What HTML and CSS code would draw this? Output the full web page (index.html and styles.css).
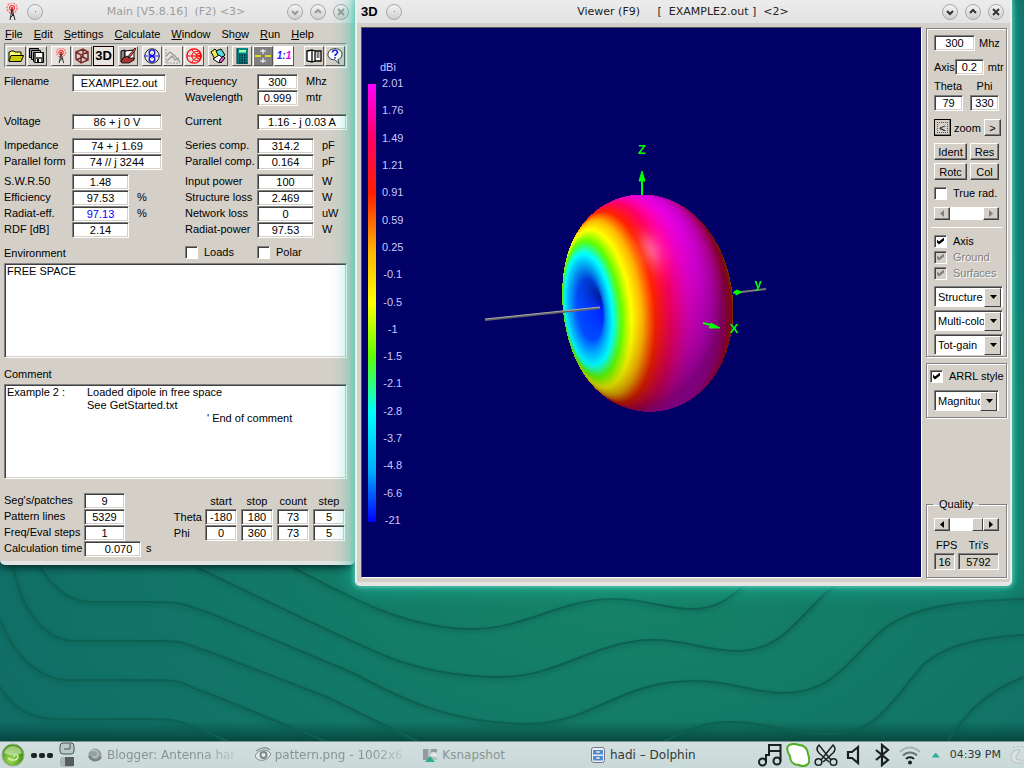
FILE: index.html
```html
<!DOCTYPE html>
<html lang="en">
<head>
  <meta charset="UTF-8">
  <meta name="viewport" content="width=device-width, initial-scale=1.0">
  <title>Main [V5.8.16]</title>
  <link rel="stylesheet" href="styles.css">
</head>
<body>
  <svg class="defs" aria-hidden="true">
    <symbol id="antenna" viewBox="0 0 16 18">
      <circle cx="8" cy="5" r="5" fill="none" stroke="#f77" stroke-width="1.500" stroke-dasharray="2 1"/>
      <circle cx="8" cy="5" r="2.500" fill="none" stroke="#f33" stroke-width="1.200"/>
      <circle cx="8" cy="5" r="1" fill="#d00"/>
      <path d="M8 6 L6 17 M8 6 L11 17 M7 10 L10 13 M10 11 L6 15" stroke="#222" fill="none"/>
    </symbol>
    <symbol id="down" viewBox="0 0 16 16"><path d="M5 7 L8 10 L11 7"/></symbol>
    <symbol id="up" viewBox="0 0 16 16"><path d="M5 9 L8 6 L11 9"/></symbol>
    <symbol id="close" viewBox="0 0 16 16"><path d="M5 5 L11 11 M11 5 L5 11"/></symbol>
  </svg>

  <main class="desktop">
    <svg class="wallpaper" viewBox="0 0 1024 741" preserveAspectRatio="none" aria-hidden="true">
      <g class="wave-shade">
        <path d="M294 568 C350 597 405 629 473 629 C525 629 560 599 614 599 C645 599 665 609 692 609 C718 609 732 596 745 585"/>
        <path d="M196 567 C260 598 350 641 390 658 C425 671 460 677 500 677 C560 677 595 640 653 640 C690 640 705 651 738 651 C785 651 800 612 836 585"/>
        <path d="M39 565 C50 583 65 601 90 602 L150 602 C190 602 185 606 210 613 L353 673 C400 698 450 724 529 724 C590 724 620 681 692 681 C735 681 750 693 784 693 C835 693 850 657 885 628 C915 606 960 601 1024 599"/>
        <path d="M13 565 C20 603 40 640 75 641 L155 641 C195 641 185 646 210 652 L327 697 L425 745"/>
        <path d="M0 620 C12 650 35 679 68 680 L150 680 C190 680 180 685 205 692 L335 745"/>
        <path d="M0 687 C12 705 25 718 55 719 L144 719 C185 719 180 723 200 729 L236 745"/>
        <path d="M657 745 C690 728 705 722 732 722 C770 722 790 735 830 734 C880 734 895 695 925 663 C950 643 985 637 1024 635"/>
        <path d="M945 745 C960 722 980 693 1024 677"/>
      </g>
    </svg>

    <section class="window main-window">
      <header class="titlebar inactive">
        <svg class="app-icon"><use href="#antenna"/></svg>
        <button class="round dot" aria-label="Window menu"></button>
        <h1>Main [V5.8.16] &nbsp;(F2) &lt;3&gt;</h1>
        <div class="window-buttons">
          <button class="round" aria-label="Minimize"><svg><use href="#down"/></svg></button>
          <button class="round" aria-label="Maximize"><svg><use href="#up"/></svg></button>
          <button class="round" aria-label="Close"><svg><use href="#close"/></svg></button>
        </div>
      </header>

      <nav class="menubar">
        <button><u>F</u>ile</button>
        <button><u>E</u>dit</button>
        <button><u>S</u>ettings</button>
        <button><u>C</u>alculate</button>
        <button><u>W</u>indow</button>
        <button>Sh<u>o</u>w</button>
        <button><u>R</u>un</button>
        <button><u>H</u>elp</button>
      </nav>

      <div class="toolbar">
        <div class="tool-group">
          <button aria-label="Open"><svg viewBox="0 0 16 16"><path d="M1 13V4h1l1-1h3l1 1h6v4" fill="#ff6" stroke="#000"/><path d="M1 13 L3 7.500H15.500L13 13.500H1Z" fill="#cc0" stroke="#000"/></svg></button>
          <button aria-label="Save"><svg viewBox="0 0 16 16"><path d="M.5.5h9v9h-9z" fill="#888" stroke="#000"/><path d="M2.500 2.500h9v9h-9z" fill="#aaa" stroke="#000"/><path d="M4.500 4.500h10v10h-9l-1-1z" fill="#555" stroke="#000"/><path d="M7 5h6v4H7zM7 11h5v3H7z" fill="#fff"/><path d="M8 11h2v3H8z"/></svg></button>
        </div>
        <div class="tool-group">
          <button class="flat" aria-label="Geometry"><svg><use href="#antenna"/></svg></button>
          <button aria-label="Structure"><svg viewBox="0 0 16 16" fill="none" stroke="#7a2b28" stroke-width="1.500"><path d="M2 4l7-3 5 3v8l-7 3-5-4zM2 4l5 3 7-3M7 7v8M9 1v8l5 3M9 9l-7 3"/></svg></button>
          <button class="pressed" aria-label="3D viewer"><b>3D</b></button>
        </div>
        <div class="tool-group">
          <button aria-label="Edit notebook"><svg viewBox="0 0 16 16"><path d="M1 3l4-1v10l-4 2z" fill="#888" stroke="#000"/><path d="M5 3l9-1v9l-9 2z" fill="#fff" stroke="#000"/><path d="M1 14l2-4 4-2 3 2 4 0v2l-5 3H2z" fill="#a33" stroke="#000" stroke-width=".8"/><path d="M15 0L9 7l-1 3 3-2 5-7z" fill="#e55" stroke="#000" stroke-width=".7"/></svg></button>
        </div>
        <div class="tool-group">
          <button class="flat" aria-label="Far field"><svg viewBox="0 0 16 16" fill="none" stroke="#222"><circle cx="8" cy="8" r="7.200"/><path d="M0 8h16" stroke="#22f"/><circle cx="8" cy="4.700" r="2.800" stroke="#11d" stroke-width="1.300"/><circle cx="8" cy="11.300" r="2.800" stroke="#11d" stroke-width="1.300"/></svg></button>
          <button class="flat" aria-label="Line chart" disabled><svg viewBox="0 0 16 16" fill="none" stroke="#999"><path d="M1 1v14h14" stroke-dasharray="2 1"/><path d="M1 8l4-4 5 4 5 6M2 13l5-5 3 4 4-2" stroke-width="1.300"/></svg></button>
          <button class="flat" aria-label="Smith chart"><svg viewBox="0 0 16 16" fill="none" stroke="#f00"><circle cx="8" cy="8" r="7.200" stroke-width="1.300"/><circle cx="10.500" cy="8" r="4.600"/><circle cx="12.500" cy="8" r="2.500"/><path d="M1 8h14M15 8C10 7 6 4 6 1M15 8c-5 1-9 4-9 7"/></svg></button>
        </div>
        <div class="tool-group">
          <button aria-label="Optimize"><svg viewBox="0 0 16 16"><path d="M1 4l4-3 5 6-5 4z" fill="#ee5" stroke="#000"/><path d="M6 3l5-2 4 6-5 4z" fill="#5dd" stroke="#000"/><path d="M3 11l6-4 5 4-5 4z" fill="#fff" stroke="#000"/><path d="M9 13l4-5 2 2-4 5z" fill="#d5d" stroke="#000"/></svg></button>
        </div>
        <div class="tool-group">
          <button aria-label="Calculator"><svg viewBox="0 0 16 16"><path d="M3 0h11v16H3z" fill="#088"/><path d="M3 0v16h11" fill="none" stroke="#033"/><path d="M5 2h7v2.500H5z" fill="#afa"/><path d="M5 7h8M5 9.500h8M5 12h8M5 14.300h8" stroke="#023" stroke-width="1.500" stroke-dasharray="1.500 1"/></svg></button>
          <button class="gray" aria-label="Split view"><svg viewBox="0 0 16 16"><path d="M0 8h6M10 8h6" stroke="#dd2" stroke-width="2"/><path d="M8 1v5M5 3h6M8 10v5M5 13h6" stroke="#fff"/></svg></button>
          <button class="ratio" aria-label="Scale one to one"><i>1:<span>1</span></i></button>
        </div>
        <div class="tool-group last">
          <button aria-label="Manual"><svg viewBox="0 0 16 16"><path d="M1 3l5-1v12l-5-1zM6 2l3 1v10l-3 1M9 3h6v10H9z" fill="#fff" stroke="#000" stroke-width="1.300"/><path d="M10.500 5h3M10.500 7h3M10.500 9h3" stroke="#000"/></svg></button>
          <button aria-label="Help"><svg viewBox="0 0 16 16"><path d="M8 .7c4 0 7 2 7 5.500 0 3-2 5-4 5.500l1 4-4-4C4 12 1 10 1 6.500S4 .7 8 .7z" fill="#fff" stroke="#333"/><path d="M5.500 4.500c0-3 5-3 5 0 0 1.500-2.500 1.500-2.500 3.500" fill="none" stroke="#22d" stroke-width="1.700"/><path d="M7.200 9h1.600v1.500H7.200z" fill="#22d"/></svg></button>
        </div>
      </div>

      <form class="main-form">
        <div class="results">
          <div class="column left">
            <div class="block top">
              <div class="field"><label for="filename">Filename</label><input id="filename" class="w-file" value="EXAMPLE2.out"></div>
            </div>
            <div class="block">
              <div class="field"><label for="voltage">Voltage</label><input id="voltage" class="w-wide" value="86 + j 0 V"></div>
            </div>
            <div class="block tight">
              <div class="field"><label for="impedance">Impedance</label><input id="impedance" class="w-wide" value="74 + j 1.69"></div>
              <div class="field"><label for="parallel">Parallel form</label><input id="parallel" class="w-wide" value="74 // j 3244"></div>
            </div>
            <div class="block">
              <div class="field"><label for="swr">S.W.R.50</label><input id="swr" value="1.48"></div>
              <div class="field"><label for="efficiency">Efficiency</label><input id="efficiency" value="97.53"><span>%</span></div>
              <div class="field"><label for="radeff">Radiat-eff.</label><input id="radeff" class="blue" value="97.13"><span>%</span></div>
              <div class="field"><label for="rdf">RDF [dB]</label><input id="rdf" value="2.14"></div>
            </div>
            <label class="caption" for="environment">Environment</label>
          </div>
          <div class="column right">
            <div class="block top">
              <div class="field"><label for="frequency">Frequency</label><input id="frequency" class="w-small" value="300"><span>Mhz</span></div>
              <div class="field"><label for="wavelength">Wavelength</label><input id="wavelength" class="w-small" value="0.999"><span>mtr</span></div>
            </div>
            <div class="block">
              <div class="field"><label for="current">Current</label><input id="current" class="w-wide" value="1.16 - j 0.03 A"></div>
            </div>
            <div class="block tight">
              <div class="field"><label for="series">Series comp.</label><input id="series" value="314.2"><span>pF</span></div>
              <div class="field"><label for="parcomp">Parallel comp.</label><input id="parcomp" value="0.164"><span>pF</span></div>
            </div>
            <div class="block">
              <div class="field"><label for="inpower">Input power</label><input id="inpower" value="100"><span>W</span></div>
              <div class="field"><label for="strloss">Structure loss</label><input id="strloss" value="2.469"><span>W</span></div>
              <div class="field"><label for="netloss">Network loss</label><input id="netloss" value="0"><span>uW</span></div>
              <div class="field"><label for="radpower">Radiat-power</label><input id="radpower" value="97.53"><span>W</span></div>
            </div>
            <div class="checks">
              <label class="check"><input type="checkbox">Loads</label>
              <label class="check"><input type="checkbox">Polar</label>
            </div>
          </div>
        </div>

        <textarea id="environment" spellcheck="false">FREE SPACE</textarea>
        <label class="caption comment-caption" for="comment">Comment</label>
        <textarea id="comment" spellcheck="false">Example 2 :&#9;Loaded dipole in free space
&#9;&#9;See GetStarted.txt
&#9;&#9;&#9;&#9;&#9;' End of comment</textarea>

        <div class="stats">
          <div class="counts">
            <div class="field"><label for="segs">Seg's/patches</label><input id="segs" class="w-small" value="9"></div>
            <div class="field"><label for="lines">Pattern lines</label><input id="lines" class="w-small" value="5329"></div>
            <div class="field"><label for="steps">Freq/Eval steps</label><input id="steps" class="w-small" value="1"></div>
            <div class="field"><label for="time">Calculation time</label><input id="time" class="time" value="0.070"><span>s</span></div>
          </div>
          <table class="sweep">
            <thead>
              <tr><td></td><th>start</th><th>stop</th><th>count</th><th>step</th></tr>
            </thead>
            <tbody>
              <tr><th>Theta</th><td><input aria-label="Theta start" value="-180"></td><td><input aria-label="Theta stop" value="180"></td><td><input aria-label="Theta count" value="73"></td><td><input aria-label="Theta step" value="5"></td></tr>
              <tr><th>Phi</th><td><input aria-label="Phi start" value="0"></td><td><input aria-label="Phi stop" value="360"></td><td><input aria-label="Phi count" value="73"></td><td><input aria-label="Phi step" value="5"></td></tr>
            </tbody>
          </table>
        </div>
      </form>
    </section>

    <section class="window viewer-window">
      <header class="titlebar">
        <b class="app-3d">3D</b>
        <button class="round dot" aria-label="Window menu"></button>
        <h1>Viewer (F9) &nbsp; &nbsp; [ &nbsp;EXAMPLE2.out ] &nbsp;&lt;2&gt;</h1>
        <div class="window-buttons">
          <button class="round" aria-label="Minimize"><svg><use href="#down"/></svg></button>
          <button class="round" aria-label="Maximize"><svg><use href="#up"/></svg></button>
          <button class="round" aria-label="Close"><svg><use href="#close"/></svg></button>
        </div>
      </header>

      <div class="viewer-body">
        <div class="viewport">
          <div class="scale">
            <span class="unit">dBi</span>
            <div class="scale-row">
              <div class="bar"></div>
              <ol>
                <li>2.01</li><li>1.76</li><li>1.49</li><li>1.21</li><li>0.91</li><li>0.59</li><li>0.25</li><li>-0.1</li><li>-0.5</li><li>-1</li><li>-1.5</li><li>-2.1</li><li>-2.8</li><li>-3.7</li><li>-4.8</li><li>-6.6</li><li>-21</li>
              </ol>
            </div>
          </div>
          <div class="scene">
            <canvas id="pattern" width="330" height="320"></canvas>
            <svg class="axes" viewBox="0 0 330 320">
              <path d="M8 177 L123 165" stroke="#666" stroke-width="2"/>
              <path d="M8 176 L123 164" stroke="#aaa" stroke-width="1"/>
              <path d="M256 150 L289 146" stroke="#777" stroke-width="2"/>
              <g fill="#0f0" stroke="#0f0">
                <path d="M165 52 V34" stroke-width="2"/>
                <path d="M162 38 L165 28 L168 38 Z"/>
                <path d="M226 180 L234 182" stroke-width="2"/>
                <path d="M232 185 L234 180 L243 185 Z"/>
                <path d="M257 149 H261" stroke-width="2"/>
                <path d="M259 147 L265 149 L259 152 Z"/>
              </g>
              <g class="axis-names">
                <text x="165" y="11">Z</text>
                <text x="281" y="145">y</text>
                <text x="257" y="190">X</text>
              </g>
            </svg>
          </div>
        </div>

        <aside class="side">
          <div class="group view-group">
            <div class="row freq-row"><input id="vfreq" value="300"><label for="vfreq">Mhz</label></div>
            <div class="row axis-row"><label for="vaxis">Axis</label><input id="vaxis" value="0.2"><span>mtr</span></div>
            <div class="angles">
              <label for="vtheta">Theta</label><label for="vphi">Phi</label>
              <input id="vtheta" value="79"><input id="vphi" value="330">
            </div>
            <div class="row zoom-row"><button type="button" class="default">&lt;</button><span>zoom</span><button type="button">&gt;</button></div>
            <div class="buttons">
              <button>Ident</button><button>Res</button>
              <button>Rotc</button><button>Col</button>
            </div>
            <label class="check rad"><input type="checkbox">True rad.</label>
            <div class="slider off"><button aria-label="Less" disabled><i class="tri left"></i></button><input type="range" aria-label="Radius" disabled><button aria-label="More" disabled><i class="tri"></i></button></div>
            <hr>
            <div class="layers">
              <label class="check"><input type="checkbox" checked>Axis</label>
              <label class="check"><input type="checkbox" checked disabled><span>Ground</span></label>
              <label class="check"><input type="checkbox" checked disabled><span>Surfaces</span></label>
            </div>
            <div class="selects">
              <div class="select"><select aria-label="Structure"><option>Structure</option></select></div>
              <div class="select"><select aria-label="Colors"><option>Multi-color</option></select></div>
              <div class="select"><select aria-label="Gain"><option>Tot-gain</option></select></div>
            </div>
          </div>
          <div class="group arrl-group">
            <label class="check"><input type="checkbox" checked>ARRL style</label>
            <div class="select"><select aria-label="Style"><option>Magnitude</option></select></div>
          </div>
          <fieldset class="quality">
            <legend>Quality</legend>
            <div class="slider"><button aria-label="Lower"><i class="tri left"></i></button><input type="range" aria-label="Quality" value="100"><button aria-label="Higher"><i class="tri"></i></button></div>
            <div class="meters">
              <label for="fps">FPS</label><label for="tris">Tri's</label>
              <input id="fps" value="16" readonly><input id="tris" value="5792" readonly>
            </div>
          </fieldset>
        </aside>
      </div>
    </section>
  </main>

  <footer class="taskbar">
    <button class="launcher" aria-label="Applications"><svg viewBox="0 0 24 24"><defs><radialGradient id="lg" cx=".4" cy=".7"><stop offset="0" stop-color="#a8e05a"/><stop offset="1" stop-color="#4a9a18"/></radialGradient></defs><circle cx="12" cy="12" r="11" fill="url(#lg)" stroke="#9aaa9a"/><path d="M3 10c2-9 16-9 18 0-5 3-13 3-18 0z" fill="#e4f5d0" opacity=".55"/><path d="M7 15c3 3 9 3 10-1 0-3-4-3-4 0" fill="none" stroke="#dff2c8" stroke-width="1.200"/></svg></button>
    <button class="dots" aria-label="Activities"><i></i><i></i><i></i></button>
    <div class="pager">
      <svg viewBox="0 0 16 26"><rect x="1" y="1" width="14" height="11" rx="3" fill="#b9c9c7" stroke="#455"/><path d="M5 7h6V2" fill="none" stroke="#455"/><rect x="1" y="15" width="14" height="10" rx="3" fill="#aab5b5"/><path d="M6 15h9v9H6z" fill="#555d5f"/></svg>
    </div>
    <nav class="tasks">
      <a href="#" class="min"><svg viewBox="0 0 16 16"><circle cx="8" cy="8" r="6.500" fill="#969f9f"/><path d="M4 4c3-2 7 0 7 3s-4 4-5 2" fill="none" stroke="#b9c3c3" stroke-width="1.500"/><path d="M2 9c2 5 9 6 12 1" fill="none" stroke="#767f7f" stroke-width="2"/></svg><span class="fade">Blogger: Antenna har</span></a>
      <a href="#" class="min"><svg viewBox="0 0 16 16"><path d="M0 9C3 2 12 1 16 7c-3 7-13 9-16 2z" fill="#e3eaea" stroke="#7d8787"/><circle cx="8.500" cy="8" r="4" fill="#7d8787"/><circle cx="8.500" cy="8" r="2" fill="#e3eaea"/><path d="M1 4C6 0 12 0 15 3" fill="none" stroke="#8d9797" stroke-width="1.500"/></svg><span class="fade">pattern.png - 1002x6</span></a>
      <a href="#" class="min"><svg viewBox="0 0 16 16"><path d="M1 2h14v11H1z" fill="#b9c3c3"/><path d="M1 2h5v11H1zM9 2h6v3H9z" fill="#929c9c"/><path d="M7 9l4-4 4 2v3z" fill="#e1e8e8"/><path d="M8 9l5 6H3z" fill="#27ae94"/></svg><span>Ksnapshot</span></a>
      <a href="#"><svg viewBox="0 0 16 16"><rect x="1.500" y=".5" width="13" height="15" rx="2" fill="#e8eef4" stroke="#778"/><path d="M3 3h10v4.500H3zM3 9h10v4.500H3z" fill="#4a90dc"/><path d="M6 4h4v2H6zM6 10h4v2H6z" fill="#fff" stroke="#567" stroke-width=".5"/></svg><span>hadi – Dolphin</span></a>
    </nav>
    <div class="tray">
      <svg viewBox="0 0 24 24" fill="none" stroke="#1a1f1f" stroke-width="2"><circle cx="4.500" cy="19" r="3.500"/><circle cx="19" cy="18" r="3.500"/><path d="M8 19v-7h3V2h11.500v16M11 8h11"/></svg>
      <svg viewBox="0 0 24 24"><path d="M2 3c3-3 8-2 11-1 6 0 9 5 9 9 1 3 2 8 0 10-3 3-7 2-9 1-6 0-9-4-9-9-2-3-4-7-2-10z" fill="#fff" stroke="#4fae22" stroke-width="2"/></svg>
      <svg viewBox="0 0 24 24" fill="none" stroke="#1a1f1f" stroke-width="1.500"><circle cx="4.500" cy="19" r="3.300"/><circle cx="19.500" cy="19" r="3.300"/><path d="M7 17L19 2c3 3 2 6 0 8l-10 9M17 17L5 2C2 5 3 8 5 10l10 9"/></svg>
      <svg viewBox="0 0 24 24" fill="none" stroke="#1a1f1f" stroke-width="2.200"><path d="M6 9h4l6-5v16l-6-5H6z"/></svg>
      <svg viewBox="0 0 24 24" fill="none" stroke="#1a1f1f" stroke-width="2.200"><path d="M6 7l12 10-6 5V2l6 5L6 17"/></svg>
      <svg viewBox="0 0 24 24" fill="none" stroke-width="2"><path d="M2 9c6-6 14-6 20 0" stroke="#a6b1b0"/><path d="M5 12.500c4-4 10-4 14 0" stroke="#6d7877"/><path d="M8 16c2-2.500 6-2.500 8 0" stroke="#1a1f1f"/><circle cx="12" cy="19.500" r="2" fill="#1a1f1f"/></svg>
      <i class="expand"></i>
      <time>04:39 PM</time>
      <svg class="cashew" viewBox="0 0 16 20"><path d="M12 5C6 4 3 8 3 12s4 7 10 6c2 0 2-2 0-3-4 0-6-1-5-3 1-3 3-4 4-7z" fill="#d9e2e1" stroke="#b3bfbd"/><path d="M6 2v1M10 1v1M14 1v1" stroke="#b3bfbd" stroke-width="2"/></svg>
    </div>
  </footer>
  <script src="pattern.js"></script>
</body>
</html>
```
FILE: styles.css
```css
* {
  box-sizing: border-box;
}

body {
  margin: 0;
  height: 100vh;
  display: flex;
  flex-direction: column;
  overflow: hidden;
  font-family: "Liberation Sans", Arial, sans-serif;
  font-size: 11px;
  line-height: 16px;
  color: #000;
}

button, input, select, textarea {
  font: inherit;
  color: inherit;
  margin: 0;
  padding: 0;
}

.defs {
  position: absolute;
  width: 0;
  height: 0;
}

/* Desktop */
.desktop {
  flex: 1;
  min-height: 0;
  position: relative;
  overflow: hidden;
  background:
    linear-gradient(to top, rgba(0, 50, 45, 0.65), transparent 20px),
    radial-gradient(ellipse 75% 60% at 60% 76%, #168468, #0f6a66);
}

.wallpaper {
  position: absolute;
  width: 100%;
  height: 100%;
}

.wave-shade path {
  fill: none;
  stroke: #0d6153;
  stroke-width: 2;
  filter: drop-shadow(0 2px 2px rgba(10, 80, 70, 0.6));
}

/* Windows */
.window {
  position: absolute;
  display: flex;
  flex-direction: column;
  background: #d4d0c8;
  border-bottom: 4px solid #e4e4e4;
  border-radius: 0 0 5px 5px;
}

.main-window {
  left: 0;
  top: 0;
  width: 355px;
  box-shadow: 0 2px 8px #022;
}

.viewer-window {
  left: 355px;
  right: 12px;
  top: 0;
  bottom: 155px;
  border-left: 2px solid #eee;
  border-right: 2px solid #eee;
  box-shadow: 0 0 5px 1px #5ccfb8, 0 0 20px 3px rgba(30, 190, 160, 0.7);
}

.titlebar {
  display: flex;
  align-items: center;
  gap: 7px;
  height: 23px;
  padding: 0 6px 0 4px;
  background: linear-gradient(#ececec, #e2e2e2);
  font-family: "DejaVu Sans", sans-serif;
}

.titlebar h1 {
  flex: 1;
  margin: 0;
  padding-left: 22px;
  text-align: center;
  font-size: 11px;
  font-weight: normal;
  color: #222;
}

.inactive h1 {
  color: #9c9c9c;
}

.app-icon {
  width: 16px;
  height: 18px;
}

.app-3d {
  width: 18px;
  font-family: "Liberation Sans", Arial, sans-serif;
  font-size: 13px;
}

.round {
  display: flex;
  align-items: center;
  justify-content: center;
  width: 16px;
  height: 16px;
  border: 1px solid #a8a8a8;
  border-radius: 50%;
  background: linear-gradient(#f4f4f4, #cfcfcf);
}

.round svg {
  width: 16px;
  height: 16px;
  flex: none;
  fill: none;
  stroke: #333;
  stroke-width: 2;
}

.inactive .round svg {
  stroke: #999;
}

.dot::before {
  content: "";
  width: 1px;
  height: 1px;
  background: #777;
}

.window-buttons {
  display: flex;
  gap: 7px;
}

.menubar {
  display: flex;
  gap: 11px;
  padding: 3px 5px 1px;
}

.menubar button {
  border: 0;
  background: none;
}

.toolbar {
  display: flex;
  gap: 4px;
  height: 25px;
  margin: 0 8px 0 4px;
  padding: 2px 1px;
  border: 1px solid;
  border-color: #7b8b88 #fff #fff #7b8b88;
}

.tool-group {
  display: flex;
  gap: 1px;
}

.tool-group.last {
  margin-left: auto;
}

.toolbar button {
  display: flex;
  align-items: center;
  justify-content: center;
  width: 20px;
  height: 20px;
  background: #d4d0c8;
  border: 1px solid;
  border-color: #fff #555 #555 #fff;
}

.toolbar svg {
  width: 16px;
  height: 16px;
}

.toolbar .flat {
  background: #e6e2de;
}

.toolbar .pressed {
  width: 21px;
  border: 1px solid #200;
  background: #e8e4e0;
  font-size: 13px;
}

.toolbar .gray {
  background: #808080;
}

.toolbar .ratio {
  background: #fff;
  font-weight: bold;
  font-size: 10px;
  color: #22f;
}

.ratio span {
  color: #e0e;
}

/* Sunken boxes */
input:not([type]), textarea {
  height: 16px;
  border: 1px solid;
  border-color: #808080 #fff #fff #808080;
  border-radius: 0;
  background: #fff;
  box-shadow: inset 1px 1px #404040, inset -1px -1px #d4d0c8;
  text-align: center;
  outline: none;
}

/* Main form */
.main-form {
  padding: 6px 8px 4px 4px;
}

.results {
  display: grid;
  grid-template-columns: 181px 1fr;
}

.column {
  display: flex;
  flex-direction: column;
  gap: 8px;
}

.block.top {
  min-height: 32px;
}

.block.tight {
  margin-bottom: -4px;
}

.field {
  display: flex;
  height: 16px;
}

.field label {
  flex: none;
  width: 68px;
  line-height: 14px;
  white-space: nowrap;
}

.right .field label {
  width: 72px;
}

.field input {
  width: 57px;
}

.field span {
  margin-left: 8px;
  line-height: 14px;
}

.field .w-file {
  width: 94px;
  height: 18px;
}

.field .w-wide {
  width: 90px;
}

.field .w-small {
  width: 41px;
}

.blue {
  color: #00f;
}

.caption {
  line-height: 14px;
}

.checks {
  display: flex;
  gap: 72px;
  margin-top: -2px;
}

.checks .check {
  width: 0;
}

.checks .check + .check {
  width: auto;
}

.check {
  display: flex;
  align-items: center;
  gap: 6px;
  height: 16px;
  white-space: nowrap;
}

.check input {
  appearance: none;
  flex: none;
  width: 13px;
  height: 13px;
  border: 1px solid;
  border-color: #808080 #fff #fff #808080;
  background: #fff;
  box-shadow: inset 1px 1px #404040;
}

.check input:checked::before {
  content: "";
  display: block;
  width: 7px;
  height: 7px;
  margin: 2px;
  background: #000;
  clip-path: polygon(0 28%, 28% 57%, 100% 0, 100% 43%, 28% 100%, 0 72%);
}

.check input:disabled {
  background: #d4d0c8;
}

.check input:disabled::before {
  background: #808080;
}

.check input:disabled + span {
  color: #808080;
  text-shadow: 1px 1px #fff;
}

textarea {
  display: block;
  width: 100%;
  height: 95px;
  padding: 1px 2px;
  line-height: 13px;
  text-align: left;
  tab-size: 40px;
  resize: none;
}

.results + textarea {
  margin-top: 3px;
}

.comment-caption {
  display: block;
  padding: 9px 0 3px;
}

.stats {
  display: flex;
  align-items: flex-start;
  justify-content: space-between;
  padding-top: 14px;
}

.counts label {
  width: 80px;
}

.counts .time {
  padding-left: 12px;
}

.counts .field span {
  margin-left: 5px;
}

.sweep {
  border-spacing: 0;
}

.sweep th {
  padding: 0;
  font-weight: normal;
  text-align: center;
}

.sweep tbody th {
  text-align: left;
  padding-right: 1px;
}

.sweep td {
  padding: 0 2px;
}

.sweep input {
  display: block;
  width: 32px;
}

/* Viewer */
.viewer-body {
  flex: 1;
  display: flex;
  gap: 4px;
  padding: 4px 3px 4px 4px;
}

.viewport {
  flex: 1;
  display: grid;
  border: 1px solid;
  border-color: #555 #fff #fff #555;
  background: #000066;
}

.scale, .scene {
  grid-area: 1 / 1;
}

.scale {
  padding: 31px 0 0 6px;
  justify-self: start;
  color: #c8c8ff;
}

.unit {
  margin-left: 12px;
}

.scale-row {
  display: flex;
  gap: 6px;
  height: 453px;
}

.bar {
  width: 8px;
  height: 438px;
  margin-top: 9px;
  background: linear-gradient(#f0f, #ff0066 12%, #ff2000 25%, #ffb400 38%, #ffff00 50%, #60ff00 62%, #00ffff 75%, #00b0ff 88%, #0000ff);
}

.scale ol {
  display: flex;
  flex-direction: column;
  justify-content: space-between;
  margin: 0;
  padding: 0;
  list-style: none;
  text-align: center;
}

.scene {
  place-self: center;
  position: relative;
  width: 330px;
  height: 320px;
}

.scene canvas {
  display: block;
}

.axes {
  position: absolute;
  inset: 0;
}

.axis-names text {
  fill: #0f0;
  font-size: 13px;
  font-weight: bold;
  text-anchor: middle;
}

.side {
  display: flex;
  flex-direction: column;
  width: 81px;
  padding-top: 1px;
}

.side label, .side span {
  white-space: nowrap;
}

.group, .quality {
  border: 1px solid #808080;
  box-shadow: 1px 1px #fff, inset 1px 1px #fff;
}

.group {
  padding: 6px 3px 1px 7px;
}

.row {
  display: flex;
  align-items: center;
}

.freq-row {
  gap: 4px;
}

.freq-row input {
  width: 41px;
}

.axis-row {
  margin-top: 8px;
}

.axis-row input {
  width: 29px;
}

.axis-row span {
  margin-left: 4px;
}

.angles {
  display: grid;
  grid-template-columns: 29px 29px;
  gap: 1px 7px;
  margin-top: 3px;
}

.angles label:nth-child(2) {
  text-align: center;
}

.angles input {
  min-width: 0;
}

.side button {
  display: flex;
  align-items: center;
  justify-content: center;
  height: 17px;
  border: 1px solid;
  border-color: #fff #404040 #404040 #fff;
  box-shadow: inset -1px -1px #808080;
  background: #d4d0c8;
}

.zoom-row {
  gap: 3px;
  margin-top: 8px;
}

.zoom-row button {
  width: 17px;
}

.zoom-row .default {
  border-color: #000;
  outline: 1px dotted #555;
  outline-offset: -4px;
}

.buttons {
  display: grid;
  grid-template-columns: 33px 29px;
  gap: 3px;
  margin-top: 7px;
}

.rad {
  margin-top: 5px;
}

.slider {
  display: flex;
  width: 65px;
  background: #fff;
}

.side .slider button {
  width: 16px;
  height: 13px;
}

.slider input {
  appearance: none;
  width: 33px;
  height: 13px;
  background: #fff;
}

.slider input::-webkit-slider-thumb {
  appearance: none;
  width: 11px;
  height: 13px;
  border: 1px solid;
  border-color: #fff #404040 #404040 #fff;
  background: #d4d0c8;
}

.off input::-webkit-slider-thumb {
  visibility: hidden;
}

.off {
  margin-top: 6px;
}

.tri {
  width: 4px;
  height: 7px;
  background: #000;
  clip-path: polygon(0 0, 100% 50%, 0 100%);
}

.tri.left {
  clip-path: polygon(100% 0, 0 50%, 100% 100%);
}

.off .tri {
  background: #808080;
}

hr {
  width: 71px;
  margin: 7px 0 5px -3px;
  border: 0;
  border-top: 1px solid #fff;
}

.selects {
  display: grid;
  gap: 3px;
  margin-top: 5px;
}

.select {
  position: relative;
  height: 21px;
  border: 1px solid;
  border-color: #808080 #fff #fff #808080;
  box-shadow: inset 1px 1px #404040;
  background: #fff;
  padding: 1px;
}

.select select {
  appearance: none;
  display: block;
  width: 100%;
  height: 17px;
  padding: 0 16px 0 2px;
  border: 0;
  border-radius: 0;
  background: none;
  overflow: hidden;
}

.select::before {
  content: "";
  position: absolute;
  top: 1px;
  right: 1px;
  width: 15px;
  height: 17px;
  border: 1px solid;
  border-color: #fff #404040 #404040 #fff;
  background: #d4d0c8;
  pointer-events: none;
}

.select::after {
  content: "";
  position: absolute;
  top: 8px;
  right: 5px;
  width: 7px;
  height: 4px;
  background: #000;
  clip-path: polygon(0 0, 100% 0, 50% 100%);
  pointer-events: none;
}

.arrl-group {
  margin-top: 6px;
  padding: 4px 7px 6px 3px;
}

.arrl-group .select {
  margin: 6px 0 0 4px;
}

.quality {
  margin: auto 0 0;
  padding: 6px 3px 7px 7px;
}

.quality legend {
  margin-left: -1px;
  padding: 0 6px;
}

.meters {
  display: grid;
  grid-template-columns: 21px 41px;
  gap: 0 3px;
  margin-top: 6px;
}

.meters label:nth-child(2) {
  text-align: center;
}

.meters label:first-child {
  margin-left: 2px;
}

.meters input:not([type]) {
  min-width: 0;
  height: 17px;
  background: #d4d0c8;
}

/* Taskbar */
.taskbar {
  display: flex;
  align-items: center;
  height: 27px;
  border-top: 1px solid #7f9492;
  background: linear-gradient(#d2e0df, #c9d9d7);
  font-family: "DejaVu Sans", sans-serif;
  font-size: 12px;
  color: #303838;
}

.launcher, .dots {
  display: flex;
  border: 0;
  background: none;
}

.launcher svg {
  width: 24px;
  height: 24px;
}

.launcher {
  margin-left: 1px;
}

.dots {
  gap: 2px;
  margin-left: 6px;
}

.dots i {
  width: 6px;
  height: 5px;
  border-radius: 2px;
  background: #1c2424;
}

.pager {
  display: flex;
  margin-left: 6px;
}

.pager svg {
  width: 16px;
  height: 26px;
}

.tasks {
  flex: 1;
  display: flex;
  margin-left: 12px;
}

.tasks a {
  flex: 1;
  display: flex;
  align-items: center;
  gap: 4px;
  max-width: 168px;
  min-width: 0;
  color: inherit;
  text-decoration: none;
}

.tasks svg {
  flex: none;
  width: 16px;
  height: 16px;
}

.tasks .min {
  color: #899492;
}

.tasks span {
  white-space: nowrap;
}

.tasks .fade {
  mask-image: linear-gradient(to right, #000 75%, rgba(0, 0, 0, 0.2));
}

.tray {
  display: flex;
  flex: none;
  align-items: center;
  gap: 4px;
}

.tray svg {
  width: 24px;
  height: 24px;
}

.expand {
  width: 8px;
  height: 5px;
  margin: 0 6px;
  background: #27ae94;
  clip-path: polygon(50% 0, 100% 100%, 0 100%);
}

.tray time {
  margin-right: 3px;
  font-size: 11px;
}

.tray .cashew {
  width: 16px;
  height: 20px;
}
```
FILE: pattern.js
```js
// Radiation pattern of a dipole along the y axis, ARRL scaled, seen from theta 79 / phi 330
const canvas = document.getElementById('pattern');
const ctx = canvas.getContext('2d');
const image = ctx.createImageData(canvas.width, canvas.height);

const R = 107.5;
const CX = 165;
const CY = 160;
const DISTANCE = 650;
const MAX_GAIN = 2.01;
const MIN_GAIN = -21;

const theta = 79 * Math.PI / 180;
const phi = 330 * Math.PI / 180;
const right = [-Math.sin(phi), Math.cos(phi), 0];
const up = [-Math.cos(theta) * Math.cos(phi), -Math.cos(theta) * Math.sin(phi), Math.sin(theta)];
const view = [Math.sin(theta) * Math.cos(phi), Math.sin(theta) * Math.sin(phi), Math.cos(theta)];

const levels = [2.01, 1.76, 1.49, 1.21, 0.91, 0.59, 0.25, -0.1, -0.5, -1, -1.5, -2.1, -2.8, -3.7, -4.8, -6.6, -21];
const colors = [
  [255, 0, 255], [255, 0, 102], [255, 32, 0], [255, 180, 0], [255, 255, 0],
  [96, 255, 0], [0, 255, 255], [0, 150, 255], [0, 0, 255]
];

// light and highlight directions in screen space (right, up, towards the viewer)
const light = normalize([-0.58, 0.4, 0.71]);
const half = normalize([-0.16, 0.37, 0.91]);

function normalize(v) {
  const l = Math.hypot(v[0], v[1], v[2]);
  return [v[0] / l, v[1] / l, v[2] / l];
}

function dot(u, v) {
  return u[0] * v[0] + u[1] * v[1] + u[2] * v[2];
}

function gain(c) {
  const s = Math.sqrt(Math.max(1 - c * c, 1e-9));
  const f = Math.cos(Math.PI / 2 * c) / s;
  return MAX_GAIN + 20 * Math.log10(Math.max(f, 1e-4));
}

// cosine of the angle between a screen space point and the dipole
function axisCos(a, b, c) {
  const d = Math.sqrt(a * a + b * b + c * c) + 1e-6;
  return (a * right[1] + b * up[1] + c * view[1]) / d;
}

function outside(a, b, c) {
  const d = Math.sqrt(a * a + b * b + c * c);
  if (d > R + 2) return d - R;
  return d - R * Math.pow(0.89, (MAX_GAIN - gain(axisCos(a, b, c))) / 2);
}

function colorFor(db) {
  let i = 0;
  while (i < levels.length - 2 && db < levels[i + 1]) i++;
  const t = (i + (levels[i] - db) / (levels[i] - levels[i + 1])) / 2;
  const k = Math.min(Math.floor(t), colors.length - 2);
  return [0, 1, 2].map(n => colors[k][n] + (colors[k + 1][n] - colors[k][n]) * (t - k));
}

for (let py = 0; py < canvas.height; py++) {
  for (let px = 0; px < canvas.width; px++) {
    const sx = px - CX;
    const sy = CY - py;
    if (Math.hypot(sx, sy) > R * 1.1) continue;

    const at = z => [sx * (DISTANCE - z) / DISTANCE, sy * (DISTANCE - z) / DISTANCE, z];

    let z = R;
    while (z > -R && outside(...at(z)) > 0) z -= 1;
    if (z <= -R) continue;

    let lo = z, hi = z + 1;
    for (let n = 0; n < 8; n++) {
      const m = (lo + hi) / 2;
      if (outside(...at(m)) > 0) hi = m; else lo = m;
    }

    const [a, b, c] = at(lo);
    const e = 0.5;
    const normal = normalize([
      outside(a + e, b, c) - outside(a - e, b, c),
      outside(a, b + e, c) - outside(a, b - e, c),
      outside(a, b, c + e) - outside(a, b, c - e)
    ]);
    const db = Math.max(gain(axisCos(a, b, c)), MIN_GAIN);
    const shade = Math.min(1, 0.49 + 0.6 * Math.max(0, dot(normal, light)));
    const spec = db > -1 ? 75 * Math.pow(Math.max(0, dot(normal, half)), 90) : 0;

    const rgb = colorFor(db);
    const o = (py * canvas.width + px) * 4;
    for (let n = 0; n < 3; n++) image.data[o + n] = rgb[n] * shade + spec;
    image.data[o + 3] = 255;
  }
}

ctx.putImageData(image, 0, 0);
```
